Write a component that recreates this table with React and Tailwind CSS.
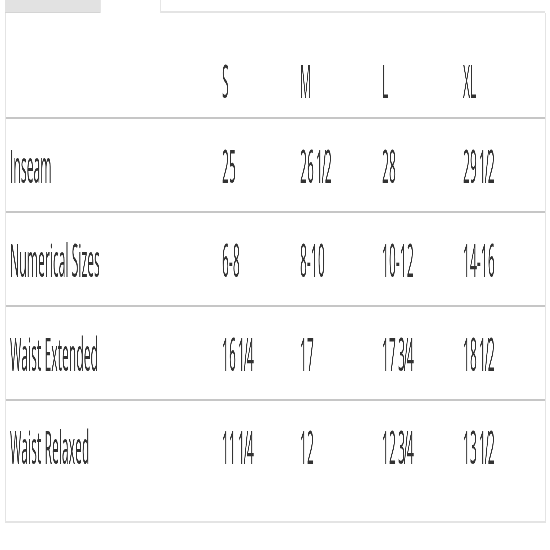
import React from "react";

const sizes = ["S", "M", "L", "XL"];

const rows = [
  { label: "Inseam", values: ["25", "26 1/2", "28", "29 1/2"] },
  { label: "Numerical Sizes", values: ["6-8", "8-10", "10-12", "14-16"] },
  { label: "Waist Extended", values: ["16 1/4", "17", "17 3/4", "18 1/2"] },
  { label: "Waist Relaxed", values: ["11 1/4", "12", "12 3/4", "13 1/2"] },
];

const Cell = ({ children, className = "" }) => (
  <div className="overflow-visible whitespace-nowrap">
    <span
      className={`inline-block origin-left scale-x-[0.265] will-change-transform text-[46px] leading-none font-normal text-[#333] [font-family:'Open_Sans',sans-serif] ${className}`}
    >
      {children}
    </span>
  </div>
);

const Value = ({ v }) => {
  const [whole, frac] = v.split(" ");
  if (!frac) return <Cell>{whole}</Cell>;
  return (
    <Cell className="[word-spacing:-4px]">
      {whole} <span className="tracking-[-5px]">{frac}</span>
    </Cell>
  );
};

const grid = "grid grid-cols-[212px_78px_82px_81px_1fr] pl-[4px]";

export default function App() {
  return (
    <div className="w-[550px] h-[550px] bg-white overflow-hidden">
      <div className="flex h-[13px] pl-[5px]">
        <div className="w-[95px] bg-[#e2e2e2] border-b border-[#d4d4d4]" />
        <div className="w-[61px] border-l border-r border-[#e6e6e6]" />
        <div className="w-[384px] border-b-2 border-[#e4e4e4]" />
      </div>
      <div className="ml-[5px] w-[541px] h-[510px] border-l border-r border-b-2 border-[#e4e4e4]">
        <div className={`${grid} h-[104px] pt-[44px]`}>
          <div />
          {sizes.map((s) => (
            <Cell key={s}>{s}</Cell>
          ))}
        </div>
        {rows.map((r, i) => (
          <div
            key={r.label}
            className={`${grid} items-center border-t-2 border-[#c6c6c6] ${i === rows.length - 1 ? "h-[122px] pb-[30px]" : "h-[94px]"}`}
          >
            <Cell>{r.label}</Cell>
            {r.values.map((v, j) => (
              <Value key={j} v={v} />
            ))}
          </div>
        ))}
      </div>
    </div>
  );
}
